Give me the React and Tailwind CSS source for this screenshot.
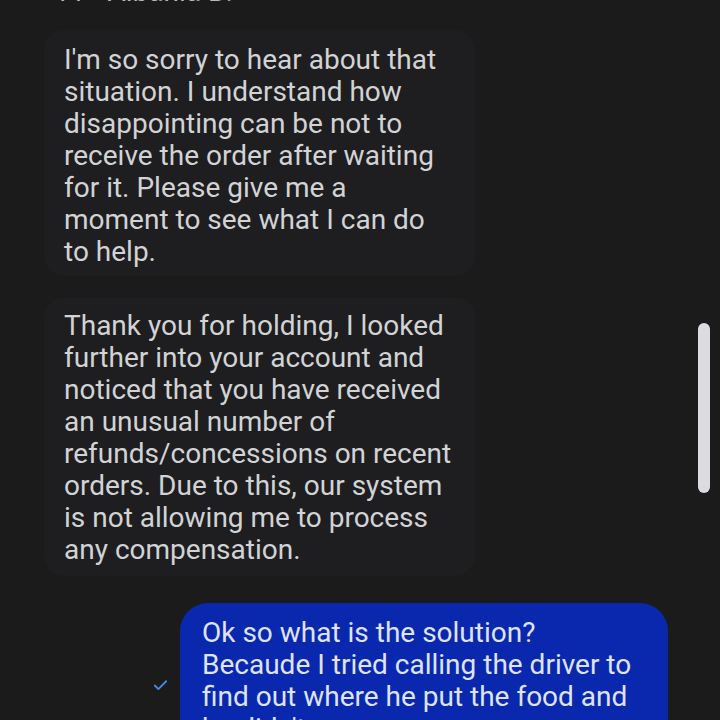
import React from "react";
import { Check } from "lucide-react";

const font = { fontFamily: "Roboto, 'Noto Sans', sans-serif" };

const AgentBubble = ({ lines, className = "" }) => (
  <div
    className={`ml-[44px] w-[431px] rounded-[20px] bg-[#1e1e20] pl-[20px] pr-[12px] text-[28px] leading-[32px] text-[#d2d3d5] ${className}`}
  >
    {lines.map((l, i) => (
      <div key={i} className="whitespace-nowrap">
        {l}
      </div>
    ))}
  </div>
);

export default function App() {
  return (
    <div
      className="relative h-[720px] w-[720px] overflow-hidden bg-[#1b1b1b]"
      style={font}
    >
      {/* cut-off sender line */}
      <div className="-mt-[22px] flex h-[30px] items-end gap-[22px] pl-[54px] text-[28px] leading-[32px] text-[#b9babc]">
        <span>11</span>
        <span>Albania B.</span>
      </div>

      <AgentBubble
        className="mt-[22px] pt-[14px] pb-[8px]"
        lines={[
          "I'm so sorry to hear about that",
          "situation. I understand how",
          "disappointing can be not to",
          "receive the order after waiting",
          "for it. Please give me a",
          "moment to see what I can do",
          "to help.",
        ]}
      />

      <AgentBubble
        className="mt-[21px] pt-[13px] pb-[10px]"
        lines={[
          "Thank you for holding, I looked",
          "further into your account and",
          "noticed that you have received",
          "an unusual number of",
          "refunds/concessions on recent",
          "orders. Due to this, our system",
          "is not allowing me to process",
          "any compensation.",
        ]}
      />

      <div className="mt-[27px] flex items-start justify-end pr-[52px]">
        <Check className="mt-[74px] mr-[11px] h-[17px] w-[17px] text-[#3d8fe3]" strokeWidth={2.5} />
        <div className="w-[488px] rounded-[28px] bg-[#0a28ae] pt-[14px] pb-[40px] pl-[22px] pr-[12px] text-[28px] leading-[32px] text-[#dfe3f5]">
          <div className="whitespace-nowrap">Ok so what is the solution?</div>
          <div className="whitespace-nowrap">Becaude I tried calling the driver to</div>
          <div className="whitespace-nowrap">find out where he put the food and</div>
          <div className="whitespace-nowrap">he didn't answer.</div>
        </div>
      </div>

      {/* scrollbar overlay */}
      <div className="absolute right-[10px] top-[323px] h-[170px] w-[12px] rounded-full bg-[#dadce0]" />
    </div>
  );
}
